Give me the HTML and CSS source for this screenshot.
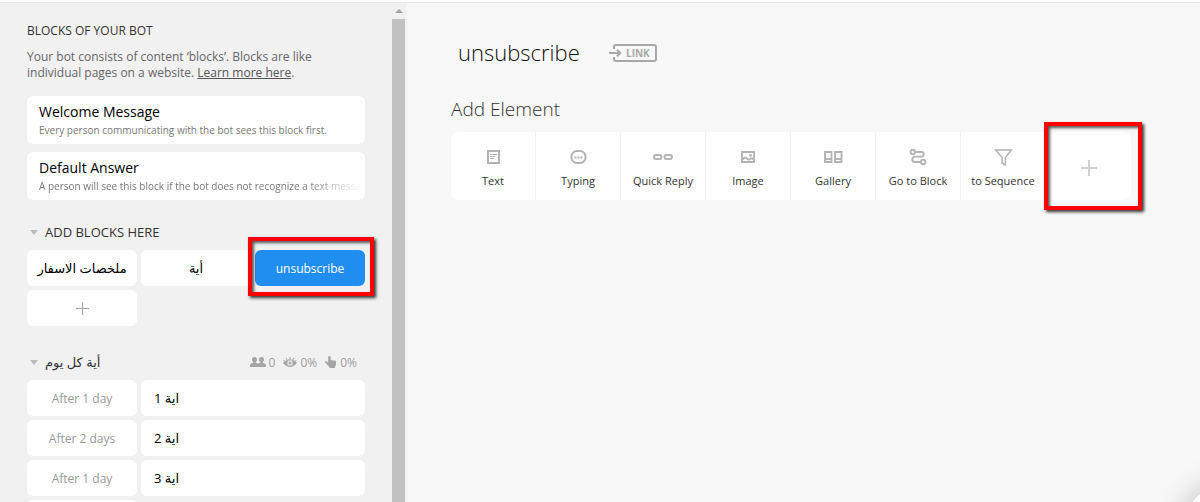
FILE: index.html
```html
<!DOCTYPE html>
<html lang="en">
<head>
    <meta charset="UTF-8">
    <meta name="viewport" content="width=device-width, initial-scale=1.0">
    <title>Bot Blocks</title>
    <link rel="stylesheet" href="styles.css">
</head>
<body>
    <div class="app">
        <!-- Left column with all blocks -->
        <aside class="sidebar">
            <div class="sidebar-content">
                <h2 class="sidebar-title">BLOCKS OF YOUR BOT</h2>
                <p class="intro">Your bot consists of content ‘blocks’. Blocks are like individual pages on a website. <a href="#">Learn more here</a>.</p>

                <button class="card">
                    <span class="card-name">Welcome Message</span>
                    <span class="card-info">Every person communicating with the bot sees this block first.</span>
                </button>
                <button class="card">
                    <span class="card-name">Default Answer</span>
                    <span class="card-info fade">A person will see this block if the bot does not recognize a text message</span>
                </button>

                <div class="group-header">
                    <span class="arrow"></span>
                    <h3>ADD BLOCKS HERE</h3>
                </div>
                <div class="block-grid">
                    <button class="block arabic">ملخصات الاسفار</button>
                    <button class="block arabic">أية</button>
                    <button class="block active marked">unsubscribe</button>
                    <button class="block" aria-label="Add block">
                        <svg width="13" height="13" viewBox="0 0 13 13"><path d="M6.5 0v13M0 6.5h13" stroke="#a5a5a5" fill="none"/></svg>
                    </button>
                </div>

                <div class="group-header">
                    <span class="arrow"></span>
                    <h3 class="arabic" dir="rtl">أية كل يوم</h3>
                    <div class="stats">
                        <span class="stat">
                            <svg width="16" height="10" viewBox="0 0 16 10" fill="#a5a5a5"><circle cx="4.5" cy="2.5" r="2.5"/><circle cx="11.5" cy="2.5" r="2.5"/><path d="M3.4 4h2.2v1.6l2 .9.4.5.4-.5 2-.9V4h2.2v1.6l2.5 1.1q.9.5.9 1.5V10H0V8.200q0-1 .9-1.500l2.500-1.100z"/></svg>
                            0
                        </span>
                        <span class="stat">
                            <svg width="14" height="11" viewBox="0 0 14 11"><path d="M0 6q7-7.500 14 0-7 8-14 0z" fill="#a5a5a5"/><circle cx="7" cy="6" r="2.700" fill="#f1f1f1"/><circle cx="7" cy="6" r="1.500" fill="#a5a5a5"/><path d="M7 0v2M3 .8l1 2M11 .8l-1 2M.5 3l1.500 1.500M13.500 3L12 4.500" stroke="#a5a5a5"/></svg>
                            0%
                        </span>
                        <span class="stat">
                            <svg width="12" height="12" viewBox="0 0 12 12" fill="#a5a5a5"><path d="M3.200 1.200q0-1.200 1.200-1.200t1.200 1.200v3q1-.6 1.800.2 1-.5 1.800.3 1.800-.4 1.800 1.300v2.500q0 1.500-1 2.300V12H4.500v-1L.4 6.800q-.8-1 .2-1.500.8-.4 1.600.4l1 .8z"/></svg>
                            0%
                        </span>
                    </div>
                </div>
                <div class="rows">
                    <button class="block delay">After 1 day</button>
                    <button class="block message arabic">1 اية</button>
                    <button class="block delay">After 2 days</button>
                    <button class="block message arabic">2 اية</button>
                    <button class="block delay">After 1 day</button>
                    <button class="block message arabic">3 اية</button>
                    <button class="block delay" aria-label="Add message"></button>
                </div>
            </div>
            <div class="scrollbar">
                <span class="scroll-up"></span>
                <span class="scroll-thumb"></span>
            </div>
        </aside>

        <!-- Block editor -->
        <main class="editor">
            <div class="block-title">
                <h1>unsubscribe</h1>
                <button class="link-button" aria-label="Link">
                    <svg width="49" height="20" viewBox="0 0 49 20">
                        <path d="M5 6V4q0-2 2-2h38q2 0 2 2v12q0 2-2 2H7q-2 0-2-2v-2M0 10h11M8 6.800L11.200 10 8 13.200" fill="none" stroke="#a8a8a8" stroke-width="2"/>
                        <text x="17" y="14" class="link-text">LINK</text>
                    </svg>
                </button>
            </div>

            <h2 class="add-title">Add Element</h2>
            <div class="elements">
                <button class="element">
                    <svg width="20" height="18" viewBox="0 0 20 18" fill="none" stroke="#b3b3b3"><path d="M5 3h11v12H5z" stroke-width="2"/><path d="M7 6.500h7M7 8.500h5M7 10.500h4" stroke-width="1.200"/></svg>
                    Text
                </button>
                <button class="element">
                    <svg width="20" height="18" viewBox="0 0 20 18" fill="none" stroke="#b3b3b3"><rect x="3.500" y="3" width="14" height="12" rx="5.500" stroke-width="2"/><path d="M6.500 9.500h2M9.500 9.500h2M12.500 9.500h2" stroke-width="2"/></svg>
                    Typing
                </button>
                <button class="element">
                    <svg width="20" height="18" viewBox="0 0 20 18" fill="none" stroke="#b3b3b3" stroke-width="2"><rect x="1" y="7" width="7.500" height="4" rx="2"/><rect x="11.500" y="7" width="7.500" height="4" rx="2"/></svg>
                    Quick Reply
                </button>
                <button class="element">
                    <svg width="20" height="18" viewBox="0 0 20 18" fill="none" stroke="#b3b3b3" stroke-width="1.800"><path d="M4 4h12v10H4zM4 12.500q3-5 5.500-1.500 1.500 1.500 3-.5 1.500-1 3.500 1.500"/><circle cx="12.500" cy="7.300" r="1.400" fill="#b3b3b3" stroke="none"/></svg>
                    Image
                </button>
                <button class="element">
                    <svg width="20" height="18" viewBox="0 0 20 18" fill="none" stroke="#b3b3b3" stroke-width="1.900"><path d="M2 4h6.500v10H2zM2 11h6.500M12 4h6.500v10H12zM12 11h6.500"/></svg>
                    Gallery
                </button>
                <button class="element">
                    <svg width="20" height="18" viewBox="0 0 20 18" fill="none" stroke="#b3b3b3" stroke-width="1.900"><circle cx="4.800" cy="4" r="2.200"/><circle cx="15.200" cy="14" r="2.200"/><path d="M7 4h6.500q2.200 0 2.200 2.300T13.500 8.600H6.800q-2.500 0-2.500 2.700T6.800 14H13"/></svg>
                    Go to Block
                </button>
                <button class="element">
                    <svg width="20" height="18" viewBox="0 0 20 18" fill="none" stroke="#b3b3b3" stroke-width="1.500"><path d="M2.700 2h15.600L12.400 9.500v7.300l-3.300-1.400V9.500z"/></svg>
                    to Sequence
                </button>
                <button class="element marked" aria-label="More elements">
                    <svg width="16" height="16" viewBox="0 0 16 16"><path d="M8 0v16M0 8h16" stroke="#d0d0d0" stroke-width="2"/></svg>
                </button>
            </div>
        </main>
    </div>

    <button class="help" aria-label="Help"></button>
</body>
</html>
```
FILE: styles.css
```css
* {
    box-sizing: border-box;
}

body {
    margin: 0;
    font-family: "Open Sans", sans-serif;
    font-size: 12px;
    color: #333;
    background: #f8f8f8;
    overflow: hidden;
}

h1, h2, h3, p {
    margin: 0;
}

button {
    font-family: inherit;
    font-size: inherit;
    color: inherit;
    border: none;
    padding: 0;
    background: #fff;
    cursor: pointer;
}

.app {
    display: flex;
    height: 100vh;
    border-top: 2px solid #fff;
    box-shadow: inset 0 1px #e8e8e8;
}

/* Sidebar */
.sidebar {
    display: flex;
    flex: 0 0 407px;
    margin-top: 1px;
    background: #f1f1f1;
    overflow: hidden;
}

.sidebar-content {
    flex: 1;
    min-width: 0;
    padding: 20px 27px 0;
}

.sidebar-title {
    font-size: 12px;
    line-height: 16px;
    font-weight: 400;
}

.intro {
    margin: 10px 0 15px;
    line-height: 16px;
    color: #666;
}

.intro a {
    color: #555;
}

.card {
    display: block;
    width: 100%;
    height: 48px;
    margin-bottom: 8px;
    padding: 0 4px 0 12px;
    border-radius: 6px;
    text-align: left;
}

.card-name {
    display: block;
    font-size: 14px;
    line-height: 20px;
    color: #000;
}

.card-info {
    display: block;
    font-size: 10px;
    line-height: 16px;
    color: #777;
    white-space: nowrap;
    overflow: hidden;
}

.fade {
    -webkit-mask-image: linear-gradient(to right, #000 82%, transparent);
    mask-image: linear-gradient(to right, #000 82%, transparent);
}

.group-header {
    display: flex;
    align-items: center;
    height: 36px;
    margin-top: 14px;
    padding: 0 8px 0 3px;
}

.group-header h3 {
    font-size: 13px;
    font-weight: 400;
}

.arrow {
    margin-right: 7px;
    border: 4px solid transparent;
    border-top: 5px solid #bbb;
    border-bottom: none;
}

.block-grid {
    display: grid;
    grid-template-columns: repeat(3, 1fr);
    gap: 4px;
    margin-bottom: 18px;
}

.block {
    display: flex;
    align-items: center;
    justify-content: center;
    height: 36px;
    border-radius: 6px;
    color: #000;
}

.arabic {
    font-family: "Open Sans", "DejaVu Sans", sans-serif;
    font-size: 13px;
}

.active {
    background: #208ef0;
    color: #fff;
}

.stats {
    display: flex;
    gap: 8px;
    margin-left: auto;
    color: #a0a0a0;
}

.stat {
    display: flex;
    align-items: center;
    gap: 3px;
}

.rows {
    display: grid;
    grid-template-columns: 110px 1fr;
    gap: 4px;
}

.delay {
    color: #999;
}

.message {
    justify-content: flex-start;
    padding-left: 13px;
}

.scrollbar {
    display: flex;
    flex-direction: column;
    flex: 0 0 15px;
    padding-right: 2px;
}

.scroll-up {
    align-self: center;
    margin: 6px 0;
    border: 4px solid transparent;
    border-top: none;
    border-bottom: 4px solid #a3a3a3;
}

.scroll-thumb {
    flex: 1;
    background: #c1c1c1;
}

/* Editor */
.editor {
    flex: 1;
    padding: 34px 44px 0;
}

.block-title {
    display: flex;
    align-items: center;
    gap: 29px;
    height: 34px;
    padding-left: 7px;
}

.block-title h1 {
    font-size: 22px;
    line-height: 30px;
    padding-bottom: 2px;
    font-weight: 300;
    color: #111;
}

.link-button {
    display: flex;
    background: none;
}

.link-text {
    font-size: 10px;
    font-weight: 700;
    fill: #a8a8a8;
}

.add-title {
    margin: 24px 0 8px;
    font-size: 19px;
    line-height: 30px;
    font-weight: 300;
}

.elements {
    display: flex;
}

.element {
    display: flex;
    flex-direction: column;
    align-items: center;
    justify-content: center;
    gap: 7px;
    width: 85px;
    height: 68px;
    padding-top: 4px;
    border-right: 1px solid #f1f1f1;
    font-size: 11px;
    line-height: 16px;
    white-space: nowrap;
}

.element:first-child {
    border-radius: 8px 0 0 8px;
}

.element:last-child {
    border-right: none;
    border-radius: 0 8px 8px 0;
}

/* Red highlight frames */
.marked {
    position: relative;
}

.marked::after {
    content: "";
    position: absolute;
    inset: -13px -9px -10px -7px;
    border: 4px solid #f00;
    box-shadow: 2px 2px 3px #333, inset 2px 2px 3px #555;
}

.element.marked::after {
    inset: -10px -11px -10px -2px;
}

/* Round button in the corner */
.help {
    position: fixed;
    right: -65px;
    bottom: -63px;
    width: 80px;
    height: 80px;
    border-radius: 50%;
    box-shadow: 0 0 30px rgba(0, 0, 0, 0.25);
}
```
